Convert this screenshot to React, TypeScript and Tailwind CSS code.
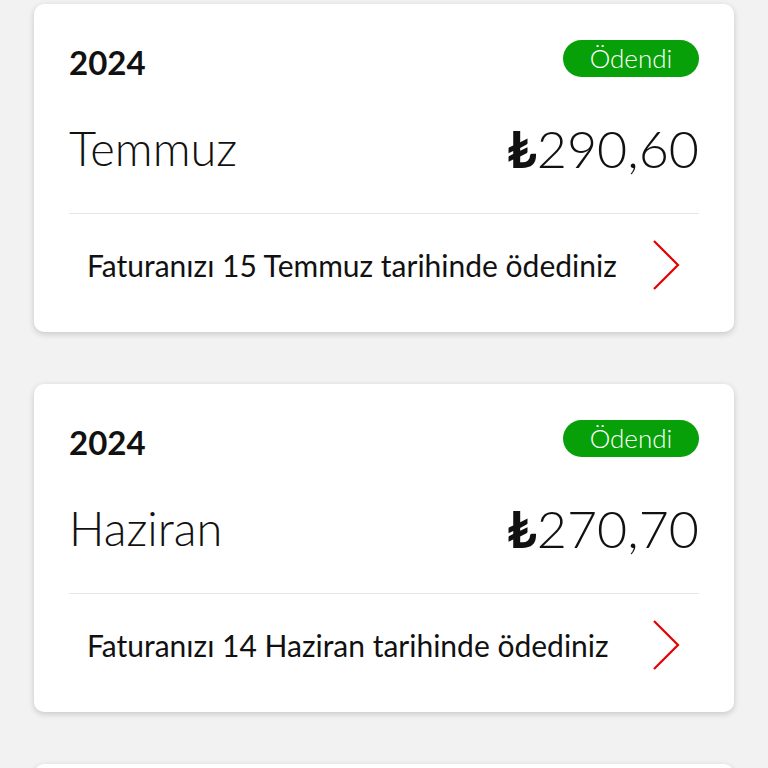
import React from "react";

type Bill = { year: string; month: string; amount: string; note: string };

const bills: Bill[] = [
  { year: "2024", month: "Temmuz", amount: "290,60", note: "Faturanızı 15 Temmuz tarihinde ödediniz" },
  { year: "2024", month: "Haziran", amount: "270,70", note: "Faturanızı 14 Haziran tarihinde ödediniz" },
  { year: "2024", month: "Mayıs", amount: "270,70", note: "Faturanızı 15 Mayıs tarihinde ödediniz" },
];

function Chevron() {
  return (
    <svg width="30" height="52" viewBox="0 0 30 52" fill="none">
      <path d="M3 2 L27 26 L3 50" stroke="#e60000" strokeWidth="2.2" strokeLinejoin="miter" />
    </svg>
  );
}

function BillCard({ bill }: { bill: Bill }) {
  return (
    <div className="rounded-[10px] bg-white px-[35px] shadow-[0_2px_6px_rgba(0,0,0,0.18)]">
      <div className="flex items-center justify-between pt-[36px]">
        <span className="text-[33px] font-bold leading-[44px] text-[#111]">{bill.year}</span>
        <span className="mb-[7px] flex h-[37px] w-[136px] items-center justify-center rounded-full bg-[#08a008] text-[26px] font-light text-white">
          Ödendi
        </span>
      </div>
      <div className="mt-[34px] flex items-center justify-between">
        <span className="text-[47px] font-light leading-[60px] text-[#111]">{bill.month}</span>
        <span className="text-[52px] font-light leading-[60px] text-[#111]">
          <span className="font-bold">₺</span>
          {bill.amount}
        </span>
      </div>
      <div className="mt-[35px] h-px bg-[#e6e6e6]" />
      <div className="flex h-[118px] items-center justify-between px-[18px] pb-[16px]">
        <span className="text-[30px] text-[#111]">{bill.note}</span>
        <Chevron />
      </div>
    </div>
  );
}

export default function App() {
  return (
    <div
      className="h-[768px] overflow-hidden bg-[#f2f2f2] px-[34px] pt-[4px]"
      style={{ fontFamily: "Lato, 'Noto Sans', sans-serif" }}
    >
      <div className="flex flex-col gap-[52px]">
        {bills.map((b, i) => (
          <BillCard key={i} bill={b} />
        ))}
      </div>
    </div>
  );
}
